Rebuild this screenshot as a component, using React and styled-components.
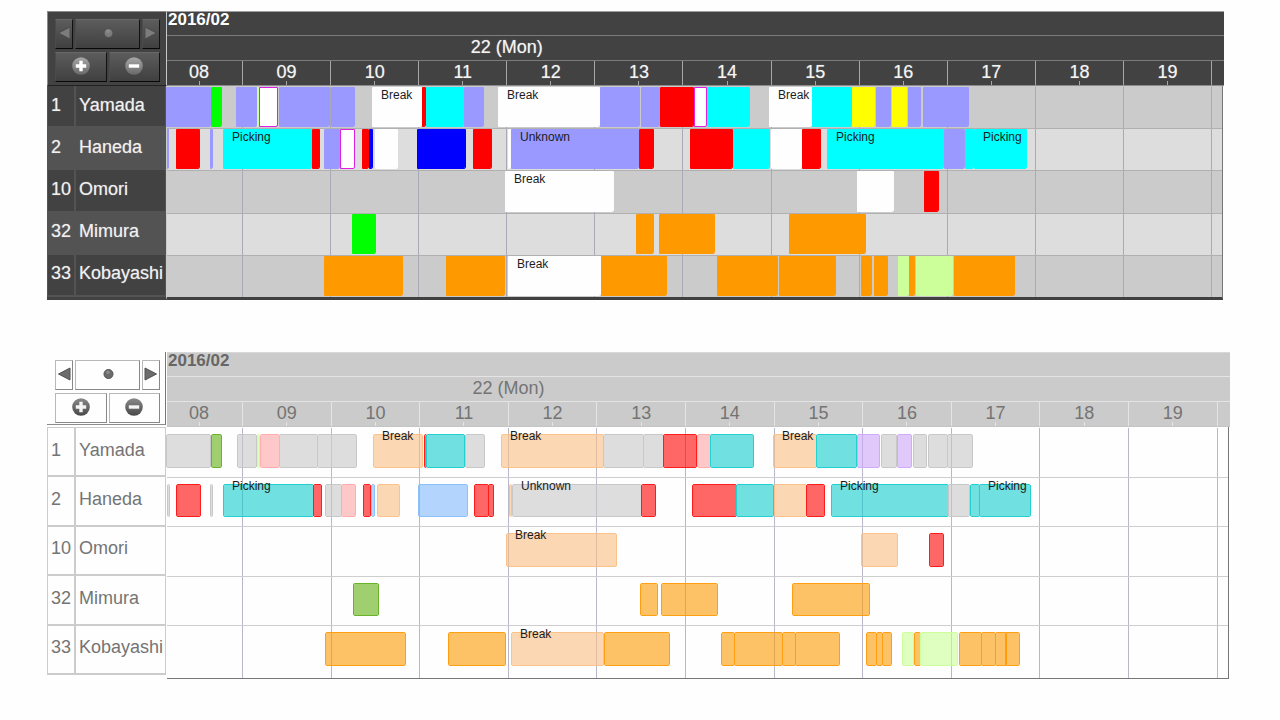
import React from "react";
import styled, { createGlobalStyle, ThemeProvider, css } from "styled-components";

const GlobalStyle = createGlobalStyle`
  * { box-sizing: border-box; }
  body {
    margin: 0;
    background: #fefefe;
    font-family: "Liberation Sans", Arial, sans-serif;
  }
`;

const darkTheme = {
  name: "dark",
  edge: 56,
  bodyInset: 1,
  headBg: "#424242",
  headLine: "#7b7b7b",
  headEnd: "#8c8c8c",
  headTick: "#a6a6a6",
  headTop: "#a0a0a0",
  headText: "#f4f4f4",
  monthText: "#ffffff",
  labelText: "#f0f0f0",
  labelPad: 2,
  glow: "0 0 1px rgba(255, 255, 255, .5)",
  labelOdd: "#424242",
  labelEven: "#535353",
  labelLine: "#535353",
  rowOdd: "#cbcbcb",
  rowEven: "#dddddd",
  rowLine: "#b0b0b0",
  gridLine: "#a9a9b8",
  frame: "#777777",
  bodyHeight: 211,
  barTop: 0,
  barBottom: 1,
  barText: "#1c1c1c",
  labelLift: 0,
  columns: "750fr repeat(11, 881fr)",
  headTail: "129fr",
  bodyTail: "109fr",
  tones: {
    violet: ["#9999ff", "#9999ff"],
    green: ["#00ff00", "#00ff00"],
    lime: ["#ccff99", "#ccff99"],
    outline: ["#ffffff", "#e020e0"],
    white: ["#fefefe", "#fefefe"],
    red: ["#ff0000", "#ff0000"],
    cyan: ["#00ffff", "#00ffff"],
    yellow: ["#ffff00", "#ffff00"],
    blue: ["#0000ff", "#0000ff"],
    orange: ["#ff9900", "#ff9900"],
  },
};

const lightTheme = {
  name: "light",
  edge: 50,
  bodyInset: 1,
  headBg: "#cbcbcb",
  headLine: "#e4e4e4",
  headEnd: "#c4c4c4",
  headTick: "#e4e4e4",
  headTop: "#d8d8d8",
  headText: "#747474",
  monthText: "#666666",
  labelText: "#747474",
  labelPad: 3,
  glow: "none",
  labelOdd: "#fefefe",
  labelEven: "#fefefe",
  labelLine: "#cccccc",
  rowOdd: "#fefefe",
  rowEven: "#fefefe",
  rowLine: "#cecece",
  gridLine: "#b8b8cb",
  frame: "#777777",
  bodyHeight: 248,
  barTop: 6,
  barBottom: 9,
  barText: "#1c1c1c",
  labelLift: -6,
  columns: "750fr repeat(11, 886fr)",
  headTail: "134fr",
  bodyTail: "114fr",
  tones: {
    grey: ["rgba(198,198,198,.6)", "#c8c8c8"],
    green: ["rgba(96,175,16,.6)", "#68b32a"],
    lime: ["rgba(202,255,150,.6)", "#ccff99"],
    pink: ["rgba(255,164,164,.6)", "#ffadad"],
    peach: ["rgba(249,189,130,.6)", "#fbc28c"],
    red: ["rgba(255,0,0,.6)", "#ff1c1c"],
    teal: ["rgba(16,204,204,.6)", "#24cfcf"],
    blue: ["rgba(128,184,250,.6)", "#8cc0fa"],
    lilac: ["rgba(204,164,249,.6)", "#d0aafb"],
    orange: ["rgba(252,153,0,.6)", "#ff9f14"],
  },
};

const Page = styled.main`
  display: flex;
  flex-direction: column;
  gap: 52px;
  padding: 11px 0 40px 47px;
`;

const Chart = styled.section`
  display: grid;
  grid-template-columns: 120px minmax(0, 1fr);
  margin-right: ${(p) => p.theme.edge}px;
`;

const Panel = styled.div`
  display: flex;
  flex-direction: column;
  gap: 3px;
  ${(p) =>
    p.theme.name === "dark"
      ? css`
          padding: 7px 6px 3px 7px;
          background: #424242;
          border: 1px solid;
          border-color: #8c8c8c #c8c8c8 #222222 #8c8c8c;
        `
      : css`
          margin: 0 1px 2px 0;
          padding: 8px 5px 1px 8px;
          border-right: 1px solid #777777;
          border-bottom: 1px solid #8c8c8c;
        `}
`;

const ButtonRow = styled.div`
  display: flex;
  gap: 2px;
`;

const ToolButton = styled.button`
  display: flex;
  align-items: center;
  justify-content: center;
  flex: ${(p) => (p.$narrow ? "0 0 18px" : "1 1 0")};
  height: 30px;
  margin: 0;
  padding: 0 0 2px;
  cursor: pointer;
  svg { flex-shrink: 0; }
  ${(p) =>
    p.theme.name === "dark"
      ? css`
          background: linear-gradient(#5c5c5c, #404040);
          border: 1px solid;
          border-color: #686868 #111111 #080808 #4c4c4c;
        `
      : css`
          background: #fefefe;
          border: 1px solid;
          border-color: #b8b8b8 #888888 #888888 #b8b8b8;
        `}
`;

const Head = styled.div`
  display: grid;
  grid-template-rows: 24px 25px 25px;
  background: ${(p) => p.theme.headBg};
  border-top: 1px solid ${(p) => p.theme.headTop};
  color: ${(p) => p.theme.headText};
  font-size: 18px;
  line-height: 23px;
`;

const HeadRow = styled.div`
  display: grid;
  grid-template-columns: ${(p) => `${p.theme.columns} ${p.theme.headTail}`};
  border-bottom: 1px solid ${(p) => p.theme.headLine};
  &:last-child { border-bottom-color: ${(p) => p.theme.headEnd}; }
`;

const Month = styled.div`
  grid-column: 1 / span 3;
  padding-left: 1px;
  font-size: 17px;
  font-weight: bold;
  line-height: 15px;
  color: ${(p) => p.theme.monthText};
`;

const Day = styled.div`
  grid-column: 1 / span 8;
  padding-right: 12px;
  text-align: center;
  text-shadow: ${(p) => p.theme.glow};
`;

const Hour = styled.div`
  display: flex;
  flex-direction: column;
  align-items: center;
  height: 24px;
  padding: 2px ${(p) => (p.$first ? 11 : 0)}px 0 0;
  border-left: ${(p) => (p.$first ? "0" : `1px solid ${p.theme.headTick}`)};
  line-height: 18px;
  white-space: nowrap;
  text-shadow: ${(p) => p.theme.glow};
  &::after {
    content: "";
    flex: none;
    width: 1px;
    height: ${(p) => (p.$blank ? 0 : 4)}px;
    background: ${(p) => p.theme.headTick};
  }
`;

const Names = styled.div`
  display: grid;
  grid-auto-rows: 1fr;
  height: ${(p) => p.theme.bodyHeight}px;
  margin-right: 1px;
  color: ${(p) => p.theme.labelText};
  font-size: 18px;
  text-shadow: ${(p) => p.theme.glow};
  border-left: 1px solid ${(p) => p.theme.labelLine};
  ${(p) => p.theme.name === "light" && "border-top: 1px solid #cccccc;"}
`;

const NameRow = styled.div`
  display: grid;
  grid-template-columns: 28px 1fr;
  background: ${(p) => p.theme.labelOdd};
  &:nth-child(even) { background: ${(p) => p.theme.labelEven}; }
`;

const NameCell = styled.div`
  display: flex;
  align-items: center;
  padding: 0 0 ${(p) => p.theme.labelPad}px 3px;
  border: solid ${(p) => p.theme.labelLine};
  border-width: 0 ${(p) => (p.$last ? 1 : 2)}px 2px 0;
`;

const Side = styled.div`
  background: ${(p) => (p.theme.name === "dark" ? "#424242" : "#fefefe")};
`;

const Body = styled.div`
  margin-right: ${(p) => p.theme.bodyInset}px;
  border-right: 1px solid ${(p) => p.theme.frame};
  ${(p) =>
    p.theme.name === "dark"
      ? css`
          border-bottom: 3px solid #404040;
          border-left: 1px solid #cbcbcb;
          margin-left: -1px;
        `
      : css`
          border-bottom: 1px solid #777777;
        `}
`;

const Tracks = styled.div`
  display: grid;
  grid-auto-rows: 1fr;
  height: ${(p) => p.theme.bodyHeight}px;
`;

const GridCells = styled.div`
  display: grid;
  grid-template-columns: ${(p) => `${p.theme.columns} ${p.theme.bodyTail}`};
`;

const GridCell = styled.i`
  border-left: 1px solid ${(p) => p.theme.gridLine};
  &:first-child { border-left: 0; }
`;

const Track = styled.div`
  position: relative;
  display: grid;
  background: ${(p) => p.theme.rowOdd};
  border-top: 1px solid ${(p) => p.theme.rowLine};
  &:nth-child(even) { background: ${(p) => p.theme.rowEven}; }
  &:first-child { border-top-color: transparent; }
`;

const Footer = styled(GridCells)`
  height: 3px;
`;

const Bar = styled.div`
  position: absolute;
  top: ${(p) => p.theme.barTop}px;
  bottom: ${(p) => p.theme.barBottom}px;
  padding-left: ${(p) => (p.$labelled ? 8 : 0)}px;
  background: ${(p) => p.theme.tones[p.$tone][0]};
  background-clip: padding-box;
  border: 1px solid ${(p) => p.theme.tones[p.$tone][1]};
  border-radius: ${(p) => (p.theme.name === "dark" ? "0 0 2px 0" : "2px")};
  white-space: nowrap;
`;

const BarLabel = styled.span`
  display: block;
  margin-top: ${(p) => p.theme.labelLift}px;
  color: ${(p) => p.theme.barText};
  font-size: 12px;
  line-height: 15px;
`;

const people = [
  ["1", "Yamada"],
  ["2", "Haneda"],
  ["10", "Omori"],
  ["32", "Mimura"],
  ["33", "Kobayashi"],
];

const hours = ["08", "09", "10", "11", "12", "13", "14", "15", "16", "17", "18", "19", ""];

const darkRows = [
  [
    ["violet", 166, 211], ["green", 211, 222], ["violet", 236, 257], ["lime", 257, 259],
    ["outline", 259, 278], ["violet", 279, 330], ["violet", 331, 355], ["white", 372, 422, "Break"],
    ["red", 422, 426], ["cyan", 426, 464], ["violet", 464, 484], ["white", 498, 600, "Break"],
    ["violet", 600, 640], ["violet", 641, 660], ["red", 660, 694], ["outline", 694, 707],
    ["cyan", 707, 750], ["white", 769, 812, "Break"], ["cyan", 812, 852], ["yellow", 852, 875],
    ["violet", 876, 891], ["yellow", 892, 907], ["violet", 908, 921], ["violet", 923, 969],
  ],
  [
    ["violet", 167, 169], ["red", 176, 200], ["violet", 210, 213], ["cyan", 223, 312, "Picking"],
    ["red", 312, 320], ["violet", 324, 340], ["outline", 340, 355], ["red", 362, 369],
    ["blue", 369, 373], ["white", 375, 398], ["blue", 417, 466], ["red", 473, 492],
    ["white", 508, 511], ["violet", 511, 639, "Unknown"], ["red", 639, 654], ["red", 690, 733],
    ["cyan", 733, 770], ["white", 771, 802], ["red", 802, 821], ["cyan", 827, 944, "Picking"],
    ["violet", 944, 965], ["cyan", 965, 974], ["cyan", 974, 1027, "Picking"],
  ],
  [["white", 505, 614, "Break"], ["white", 857, 894], ["red", 924, 939]],
  [["green", 352, 376], ["orange", 636, 654], ["orange", 659, 715], ["orange", 789, 866]],
  [
    ["orange", 324, 403], ["orange", 446, 505], ["white", 508, 601, "Break"], ["orange", 601, 667],
    ["orange", 717, 778], ["orange", 779, 836], ["orange", 861, 872], ["orange", 874, 888],
    ["lime", 898, 909], ["orange", 909, 915], ["lime", 916, 953], ["orange", 954, 1015],
  ],
];

const lightRows = [
  [
    ["grey", 166, 211], ["green", 211, 222], ["grey", 237, 257], ["lime", 257, 260],
    ["pink", 260, 280], ["grey", 279, 318], ["grey", 317, 332], ["grey", 331, 357],
    ["peach", 373, 423, "Break"], ["red", 424, 427], ["teal", 426, 465], ["grey", 465, 485],
    ["peach", 501, 604, "Break"], ["grey", 603, 644], ["grey", 643, 664], ["red", 663, 697],
    ["pink", 697, 711], ["teal", 710, 754], ["peach", 773, 817, "Break"], ["teal", 816, 857],
    ["lilac", 857, 880], ["grey", 881, 897], ["lilac", 897, 912], ["grey", 913, 927],
    ["grey", 928, 948], ["grey", 947, 973],
  ],
  [
    ["grey", 167, 170], ["red", 176, 201], ["grey", 210, 213], ["teal", 223, 314, "Picking"],
    ["red", 313, 322], ["grey", 325, 342], ["pink", 341, 356], ["red", 363, 371],
    ["blue", 371, 375], ["peach", 377, 400], ["blue", 418, 468], ["red", 474, 489],
    ["red", 488, 494], ["peach", 509, 512], ["grey", 512, 642, "Unknown"], ["red", 641, 656],
    ["red", 692, 737], ["teal", 736, 774], ["peach", 774, 807], ["red", 806, 825],
    ["teal", 831, 949, "Picking"], ["grey", 948, 970], ["teal", 970, 980], ["teal", 979, 1031, "Picking"],
  ],
  [["peach", 506, 617, "Break"], ["peach", 861, 898], ["red", 929, 944]],
  [["green", 353, 379], ["orange", 640, 658], ["orange", 661, 718], ["orange", 792, 870]],
  [
    ["orange", 325, 406], ["orange", 448, 506], ["peach", 511, 604, "Break"], ["orange", 604, 670],
    ["orange", 721, 735], ["orange", 734, 783], ["orange", 782, 796], ["orange", 795, 840],
    ["orange", 866, 877], ["orange", 876, 883], ["orange", 882, 892], ["lime", 902, 914],
    ["orange", 914, 921], ["lime", 920, 958], ["orange", 959, 982], ["orange", 981, 996],
    ["orange", 995, 1007], ["orange", 1005, 1020],
  ],
];

function Arrow({ flip, dark }) {
  return (
    <svg width="14" height="14" viewBox="0 0 14 14" aria-hidden="true">
      <path
        d={flip ? "M1 1 L12.5 7 L1 13 Z" : "M13 1 L1.5 7 L13 13 Z"}
        fill={dark ? "#7c7c7c" : "#6c6c6c"}
        stroke={dark ? "#4c4c4c" : "#505050"}
        strokeWidth="1"
      />
    </svg>
  );
}

function Dot({ dark }) {
  return (
    <svg width="12" height="12" viewBox="0 0 12 12" aria-hidden="true">
      <circle cx="6.5" cy="6" r="4.5" fill={dark ? "#7c7c7c" : "#6c6c6c"} stroke={dark ? "#4c4c4c" : "#505050"} />
      <circle cx="6" cy="4.2" r="1.8" fill="#8c8c8c" />
    </svg>
  );
}

function Zoom({ plus, dark }) {
  const id = `zoom-${plus ? "in" : "out"}-${dark ? "dark" : "light"}`;
  return (
    <svg width="20" height="20" viewBox="0 0 20 20" aria-hidden="true">
      <defs>
        <linearGradient id={id} x1="0" y1="0" x2="0" y2="1">
          <stop offset="0" stopColor={dark ? "#a8a8a8" : "#8a8a8a"} />
          <stop offset="1" stopColor={dark ? "#686868" : "#484848"} />
        </linearGradient>
      </defs>
      <circle cx="10" cy="10" r="8.8" fill={`url(#${id})`} />
      <path
        d={plus ? "M4.8 10 H15.2 M10 4.8 V15.2" : "M4.8 10 H15.2"}
        stroke={dark ? "#ffffff" : "#f4f4f4"}
        strokeWidth="3.4"
      />
    </svg>
  );
}

function Gantt({ theme, rows, range }) {
  const dark = theme.name === "dark";
  const [start, end] = range;
  const pct = (v) => `${(v / (end - start)) * 100}%`;
  return (
    <ThemeProvider theme={theme}>
      <Chart aria-label="2016/02 schedule">
        <Panel>
          <ButtonRow>
            <ToolButton $narrow aria-label="Previous"><Arrow dark={dark} /></ToolButton>
            <ToolButton aria-label="Now"><Dot dark={dark} /></ToolButton>
            <ToolButton $narrow aria-label="Next"><Arrow flip dark={dark} /></ToolButton>
          </ButtonRow>
          <ButtonRow>
            <ToolButton aria-label="Zoom in"><Zoom plus dark={dark} /></ToolButton>
            <ToolButton aria-label="Zoom out"><Zoom dark={dark} /></ToolButton>
          </ButtonRow>
        </Panel>
        <Head>
          <HeadRow><Month>2016/02</Month></HeadRow>
          <HeadRow><Day>22 (Mon)</Day></HeadRow>
          <HeadRow>
            {hours.map((h, i) => (
              <Hour key={i} $first={i === 0} $blank={!h}>{h || "\u00a0"}</Hour>
            ))}
          </HeadRow>
        </Head>
        <Side>
          <Names>
            {people.map(([id, name]) => (
              <NameRow key={id}>
                <NameCell>{id}</NameCell>
                <NameCell $last>{name}</NameCell>
              </NameRow>
            ))}
          </Names>
        </Side>
        <Body>
          <Tracks>
            {rows.map((bars, r) => (
              <Track key={r}>
                <GridCells>{hours.map((_, i) => <GridCell key={i} />)}</GridCells>
                {bars.map(([tone, from, to, label]) => (
                  <Bar
                    key={from}
                    $tone={tone}
                    $labelled={Boolean(label)}
                    style={{ left: pct(from - start), width: pct(to - from) }}
                  >
                    {label && <BarLabel>{label}</BarLabel>}
                  </Bar>
                ))}
              </Track>
            ))}
          </Tracks>
          {!dark && <Footer>{hours.map((_, i) => <GridCell key={i} />)}</Footer>}
        </Body>
      </Chart>
    </ThemeProvider>
  );
}

export default function App() {
  return (
    <>
      <GlobalStyle />
      <Page>
        <Gantt theme={darkTheme} rows={darkRows} range={[167, 1222]} />
        <Gantt theme={lightTheme} rows={lightRows} range={[167, 1228]} />
      </Page>
    </>
  );
}
